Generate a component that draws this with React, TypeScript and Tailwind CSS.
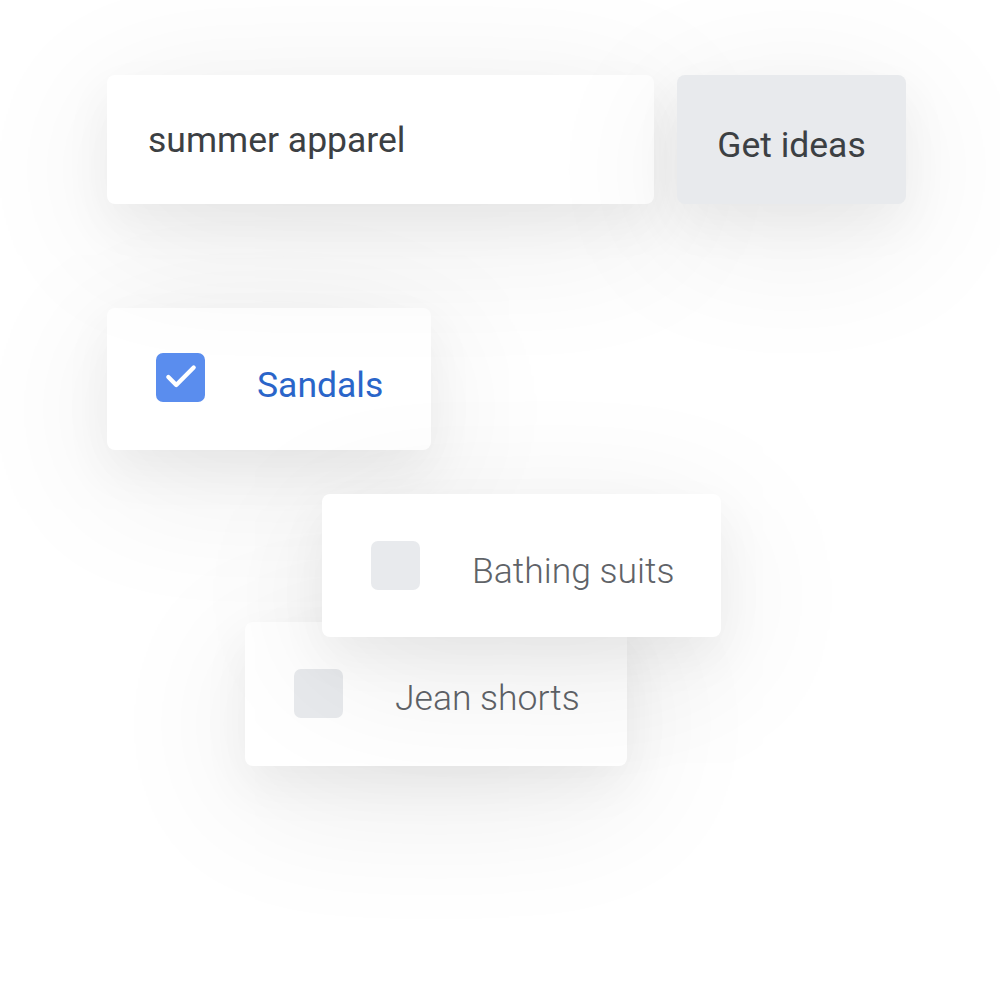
import { Check } from "lucide-react";

const cardShadow =
  "shadow-[0_30px_150px_rgba(0,0,0,0.09),0_20px_50px_rgba(0,0,0,0.05)]";

interface OptionProps {
  label: string;
  checked?: boolean;
  className?: string;
}

const Option: React.FC<OptionProps> = ({ label, checked, className }) => (
  <div className={`flex items-center bg-white rounded-[8px] ${cardShadow} ${className ?? ""}`}>
    <div
      className={`flex items-center justify-center w-[49px] h-[49px] rounded-[7px] shrink-0 ${
        checked ? "bg-[#5a8dee]" : "bg-[#e8eaed]"
      }`}
    >
      {checked && <Check size={38} strokeWidth={2.7} className="text-white" />}
    </div>
    <span
      className={`ml-[52px] text-[35.5px] ${
        checked ? "mt-[18px] text-[#2a65c9] font-normal" : "mt-[12px] text-[#5f6368] font-light"
      }`}
    >
      {label}
    </span>
  </div>
);

export default function App() {
  return (
    <div className="w-[1000px] h-[996px] bg-white overflow-hidden font-['Roboto',sans-serif] pt-[75px] pl-[107px]">
      <div className="flex gap-[23px]">
        <div className={`w-[547px] h-[129px] bg-white rounded-[8px] flex items-center pl-[41px] pt-[3px] ${cardShadow}`}>
          <span className="text-[35.5px] text-[#3c4043]">summer apparel</span>
        </div>
        <button className={`w-[229px] h-[129px] bg-[#e8eaed] rounded-[8px] flex items-center justify-center pt-[12px] text-[35.5px] text-[#3c4043] ${cardShadow}`}>
          Get ideas
        </button>
      </div>

      <Option label="Sandals" checked className="mt-[104px] w-[324px] h-[142px] pl-[49px] pb-[4px]" />

      <div className="mt-[44px]">
        <Option label="Bathing suits" className="relative z-10 ml-[215px] w-[399px] h-[143px] pl-[49px]" />
        <Option label="Jean shorts" className="-mt-[15px] ml-[138px] w-[382px] h-[144px] pl-[49px] pb-[2px] bg-[#fcfcfc]" />
      </div>
    </div>
  );
}
